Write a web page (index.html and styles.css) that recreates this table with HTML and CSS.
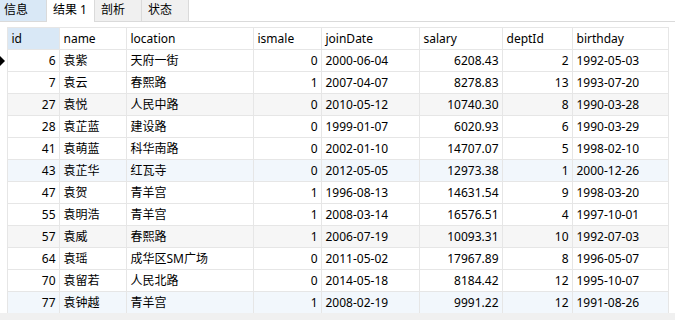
FILE: index.html
```html
<!DOCTYPE html>
<html lang="zh-CN">

<head>
    <meta charset="UTF-8">
    <meta name="viewport" content="width=device-width, initial-scale=1.0">
    <title>结果 1</title>
    <link rel="stylesheet" href="styles.css">
</head>

<body>
    <div class="tabs">
        <div class="tab tab-info">信息</div>
        <div class="tab tab-active">结果 1</div>
        <div class="tab">剖析</div>
        <div class="tab">状态</div>
    </div>
    <div class="result">
        <table class="grid">
            <colgroup>
                <col style="width: 7px">
                <col style="width: 52px">
                <col style="width: 67px">
                <col style="width: 127px">
                <col style="width: 68px">
                <col style="width: 98px">
                <col style="width: 83px">
                <col style="width: 70px">
                <col style="width: 96px">
            </colgroup>
            <thead>
                <tr>
                    <th class="marker"></th>
                    <th class="sorted">id</th>
                    <th>name</th>
                    <th>location</th>
                    <th>ismale</th>
                    <th>joinDate</th>
                    <th>salary</th>
                    <th>deptId</th>
                    <th>birthday</th>
                </tr>
            </thead>
            <tbody>
                <tr>
                    <td class="marker"><span class="cursor"></span></td>
                    <td class="num">6</td><td>袁紫</td><td>天府一街</td><td class="num">0</td><td>2000-06-04</td><td class="num">6208.43</td><td class="num">2</td><td>1992-05-03</td>
                </tr>
                <tr>
                    <td class="marker"></td>
                    <td class="num">7</td><td>袁云</td><td>春熙路</td><td class="num">1</td><td>2007-04-07</td><td class="num">8278.83</td><td class="num">13</td><td>1993-07-20</td>
                </tr>
                <tr class="alt">
                    <td class="marker"></td>
                    <td class="num">27</td><td>袁悦</td><td>人民中路</td><td class="num">0</td><td>2010-05-12</td><td class="num">10740.30</td><td class="num">8</td><td>1990-03-28</td>
                </tr>
                <tr>
                    <td class="marker"></td>
                    <td class="num">28</td><td>袁芷蓝</td><td>建设路</td><td class="num">0</td><td>1999-01-07</td><td class="num">6020.93</td><td class="num">6</td><td>1990-03-29</td>
                </tr>
                <tr>
                    <td class="marker"></td>
                    <td class="num">41</td><td>袁萌蓝</td><td>科华南路</td><td class="num">0</td><td>2002-01-10</td><td class="num">14707.07</td><td class="num">5</td><td>1998-02-10</td>
                </tr>
                <tr class="hl">
                    <td class="marker"></td>
                    <td class="num">43</td><td>袁芷华</td><td>红瓦寺</td><td class="num">0</td><td>2012-05-05</td><td class="num">12973.38</td><td class="num">1</td><td>2000-12-26</td>
                </tr>
                <tr>
                    <td class="marker"></td>
                    <td class="num">47</td><td>袁贺</td><td>青羊宫</td><td class="num">1</td><td>1996-08-13</td><td class="num">14631.54</td><td class="num">9</td><td>1998-03-20</td>
                </tr>
                <tr>
                    <td class="marker"></td>
                    <td class="num">55</td><td>袁明浩</td><td>青羊宫</td><td class="num">1</td><td>2008-03-14</td><td class="num">16576.51</td><td class="num">4</td><td>1997-10-01</td>
                </tr>
                <tr class="alt">
                    <td class="marker"></td>
                    <td class="num">57</td><td>袁威</td><td>春熙路</td><td class="num">1</td><td>2006-07-19</td><td class="num">10093.31</td><td class="num">10</td><td>1992-07-03</td>
                </tr>
                <tr>
                    <td class="marker"></td>
                    <td class="num">64</td><td>袁瑶</td><td>成华区SM广场</td><td class="num">0</td><td>2011-05-02</td><td class="num">17967.89</td><td class="num">8</td><td>1996-05-07</td>
                </tr>
                <tr>
                    <td class="marker"></td>
                    <td class="num">70</td><td>袁留若</td><td>人民北路</td><td class="num">0</td><td>2014-05-18</td><td class="num">8184.42</td><td class="num">12</td><td>1995-10-07</td>
                </tr>
                <tr class="hl">
                    <td class="marker"></td>
                    <td class="num">77</td><td>袁钟越</td><td>青羊宫</td><td class="num">1</td><td>2008-02-19</td><td class="num">9991.22</td><td class="num">12</td><td>1991-08-26</td>
                </tr>
            </tbody>
        </table>
    </div>
    <div class="hscroll"></div>
</body>

</html>
```

FILE: styles.css
```css
body {
    margin: 0;
    width: 675px;
    height: 320px;
    overflow: hidden;
    background-color: #fff;
    font-family: 'Noto Sans', 'Noto Sans CJK SC', sans-serif;
    font-size: 12px;
    color: #000;
}

.tabs {
    display: flex;
    height: 21px;
    border-bottom: 1px solid #dadada;
}

.tab {
    box-sizing: border-box;
    width: 47px;
    height: 21px;
    padding-left: 6px;
    line-height: 20px;
    background-color: #f0f0f0;
    border-right: 1px solid #dadada;
}

.tab-info {
    width: 46px;
    padding-left: 4px;
    background-color: #d9e8f6;
    border-right: none;
}

.tab-active {
    width: 49px;
    height: 22px;
    margin-bottom: -1px;
    background-color: #fff;
    border-left: 1px solid #dadada;
}

.result {
    padding-top: 5px;
    height: 286px;
}

.grid {
    border-collapse: collapse;
    table-layout: fixed;
    width: 668px;
}

.grid th,
.grid td {
    height: 21px;
    padding: 0 3px 0 4px;
    line-height: 21px;
    text-align: left;
    font-weight: normal;
    white-space: nowrap;
    overflow: hidden;
    border-right: 1px solid #e6e6e6;
    border-bottom: 1px solid #e6e6e6;
}

.grid th {
    border-top: 1px solid #e6e6e6;
}

.grid th.sorted {
    background-color: #d9e8f6;
}

.grid .marker {
    padding: 0;
    border-bottom: none;
    border-top: none;
    background-color: #fff;
}

.grid td.num {
    text-align: right;
}

.grid tr.alt td {
    background-color: #f6f6f6;
}

.grid tr.hl td {
    background-color: #f2f7fc;
}

.grid tr td.marker {
    background-color: #fff;
}

.cursor {
    display: block;
    width: 0;
    height: 0;
    border-left: 5px solid #000;
    border-top: 5px solid transparent;
    border-bottom: 5px solid transparent;
}

.hscroll {
    height: 8px;
    background-color: #f0f0f0;
}
```
